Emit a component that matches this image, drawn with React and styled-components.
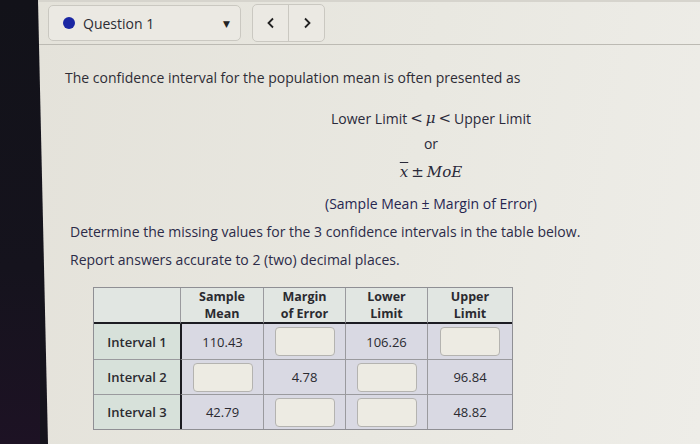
import React from 'react';
import styled, { createGlobalStyle } from 'styled-components';

const GlobalStyle = createGlobalStyle`
  html, body {
    margin: 0;
    padding: 0;
    width: 700px;
    height: 444px;
    overflow: hidden;
    background: #15141c;
  }
  body {
    font-family: "Open Sans", "DejaVu Sans", sans-serif;
  }
`;

const Screen = styled.div`
  display: flex;
  width: 700px;
  height: 444px;
`;

const Bezel = styled.div`
  width: 40px;
  flex-shrink: 0;
  background: linear-gradient(180deg, #121219 0%, #15131d 60%, #1d1224 100%);
`;

const Page = styled.div`
  flex: 1;
  display: flex;
  flex-direction: column;
  background: linear-gradient(100deg, #e4e2da 0%, #e9e8e1 55%, #eeede8 100%);
  clip-path: polygon(0 0, 100% 0, 100% 100%, 10px 100%);
  margin-left: -2px;
`;

const TopBar = styled.div`
  display: flex;
  align-items: center;
  gap: 11px;
  height: 45px;
  padding: 0 0 0 10px;
  border-top: 2px solid #d6d4cd;
  border-bottom: 1px solid #bcbab3;
  box-sizing: border-box;
`;

const QuestionSelect = styled.div`
  display: flex;
  align-items: center;
  width: 193px;
  height: 36px;
  box-sizing: border-box;
  padding: 0 10px 0 14px;
  background: #ebe9e3;
  border: 1px solid #cac8c1;
  border-radius: 5px;
  color: #2c2c34;
  font-size: 14px;
`;

const Dot = styled.span`
  width: 12px;
  height: 12px;
  border-radius: 50%;
  background: #1a26a3;
  margin-right: 8px;
`;

const Caret = styled.span`
  margin-left: auto;
  font-size: 9px;
  color: #222;
`;

const NavGroup = styled.div`
  display: flex;
  height: 36px;
  border: 1px solid #cac8c1;
  border-radius: 5px;
  background: #ebe9e3;
  overflow: hidden;
`;

const NavButton = styled.div`
  width: 35px;
  display: flex;
  align-items: center;
  justify-content: center;
  border-left: ${p => (p.$divider ? '1px solid #cac8c1' : 'none')};
`;

const Content = styled.div`
  padding: 23px 0 0 27px;
  color: #2e2d36;
  font-size: 14px;
`;

const Intro = styled.p`
  margin: 0;
`;

const Formula = styled.div`
  margin: 21px 0 0 246px;
  width: 240px;
  display: flex;
  flex-direction: column;
  align-items: center;
  color: #2a2a3a;
`;

const FormulaLine = styled.div`
  height: 20px;
  display: flex;
  align-items: center;
  margin-bottom: ${p => p.$gap || 0}px;
`;

const Tex = styled.span`
  font-family: "DejaVu Serif", "Liberation Serif", serif;
  font-style: ${p => (p.$upright ? 'normal' : 'italic')};
  font-size: 15px;
  margin: 0 ${p => p.$pad || 0}px;
`;

const Overline = styled(Tex)`
  text-decoration: overline;
`;

const Note = styled.div`
  color: #262650;
  height: 20px;
  display: flex;
  align-items: center;
`;

const Instructions = styled.div`
  margin: 9px 0 0 5px;
  display: flex;
  flex-direction: column;
  gap: 8px;
  color: #2c2b48;
  line-height: 20px;
`;

const Table = styled.div`
  margin: 17px 0 0 28px;
  display: grid;
  grid-template-columns: 86px 83px 82px 82px 85px;
  width: 418px;
  border: 1px solid #8f8f94;
  font-size: 13px;
  color: #2a2a30;
`;

const HeadCell = styled.div`
  height: 36px;
  box-sizing: border-box;
  display: flex;
  flex-direction: column;
  align-items: center;
  justify-content: center;
  text-align: center;
  line-height: 17px;
  font-size: 12.5px;
  font-weight: 700;
  background: #e1e6e2;
  border-left: ${p => (p.$first ? 'none' : '1px solid #9a9a9e')};
  border-bottom: 2px solid #1c1c22;
`;

const Cell = styled.div`
  height: 35px;
  box-sizing: border-box;
  display: flex;
  align-items: center;
  justify-content: center;
  background: ${p => (p.$label ? '#d7e1da' : '#d9d9e3')};
  font-weight: ${p => (p.$label ? 600 : 400)};
  border-left: ${p => (p.$thick ? '2px solid #1c1c22' : p.$label ? 'none' : '1px solid #9a9a9e')};
  border-top: ${p => (p.$top ? 'none' : '1px solid #9a9a9e')};
`;

const AnswerBox = styled.input`
  width: 60px;
  height: 29px;
  box-sizing: border-box;
  background: #edebe3;
  border: 1px solid #b4b3b0;
  border-radius: 4px;
  padding: 0;
  outline: none;
`;

const ChevronLeft = () => (
  <svg width="10" height="12" viewBox="0 0 10 12">
    <path d="M7 1.5 L2.5 6 L7 10.5" fill="none" stroke="#222" strokeWidth="1.8" />
  </svg>
);

const ChevronRight = () => (
  <svg width="10" height="12" viewBox="0 0 10 12">
    <path d="M3 1.5 L7.5 6 L3 10.5" fill="none" stroke="#222" strokeWidth="1.8" />
  </svg>
);

const headers = ['', ['Sample', 'Mean'], ['Margin', 'of Error'], ['Lower', 'Limit'], ['Upper', 'Limit']];

const rows = [
  { label: 'Interval 1', values: ['110.43', null, '106.26', null] },
  { label: 'Interval 2', values: [null, '4.78', null, '96.84'] },
  { label: 'Interval 3', values: ['42.79', null, null, '48.82'] },
];

export default function App() {
  return (
    <Screen>
      <GlobalStyle />
      <Bezel />
      <Page>
        <TopBar>
          <QuestionSelect>
            <Dot />
            Question 1
            <Caret>▼</Caret>
          </QuestionSelect>
          <NavGroup>
            <NavButton><ChevronLeft /></NavButton>
            <NavButton $divider><ChevronRight /></NavButton>
          </NavGroup>
        </TopBar>

        <Content>
          <Intro>The confidence interval for the population mean is often presented as</Intro>

          <Formula>
            <FormulaLine $gap={5}>
              Lower Limit<Tex $upright $pad={3}>&lt;</Tex><Tex>μ</Tex><Tex $upright $pad={3}>&lt;</Tex>Upper Limit
            </FormulaLine>
            <FormulaLine $gap={9}>or</FormulaLine>
            <FormulaLine $gap={11}>
              <Overline>x</Overline><Tex $upright $pad={3}>±</Tex><Tex>MoE</Tex>
            </FormulaLine>
            <Note>(Sample Mean ± Margin of Error)</Note>
          </Formula>

          <Instructions>
            <div>Determine the missing values for the 3 confidence intervals in the table below.</div>
            <div>Report answers accurate to 2 (two) decimal places.</div>
          </Instructions>

          <Table>
            {headers.map((h, i) => (
              <HeadCell key={i} $first={i === 0}>
                {Array.isArray(h) && h.map(line => <div key={line}>{line}</div>)}
              </HeadCell>
            ))}
            {rows.map((row, r) => (
              <React.Fragment key={row.label}>
                <Cell $label $top={r === 0}>{row.label}</Cell>
                {row.values.map((v, c) => (
                  <Cell key={c} $thick={c === 0} $top={r === 0}>
                    {v === null ? <AnswerBox type="text" /> : v}
                  </Cell>
                ))}
              </React.Fragment>
            ))}
          </Table>
        </Content>
      </Page>
    </Screen>
  );
}
